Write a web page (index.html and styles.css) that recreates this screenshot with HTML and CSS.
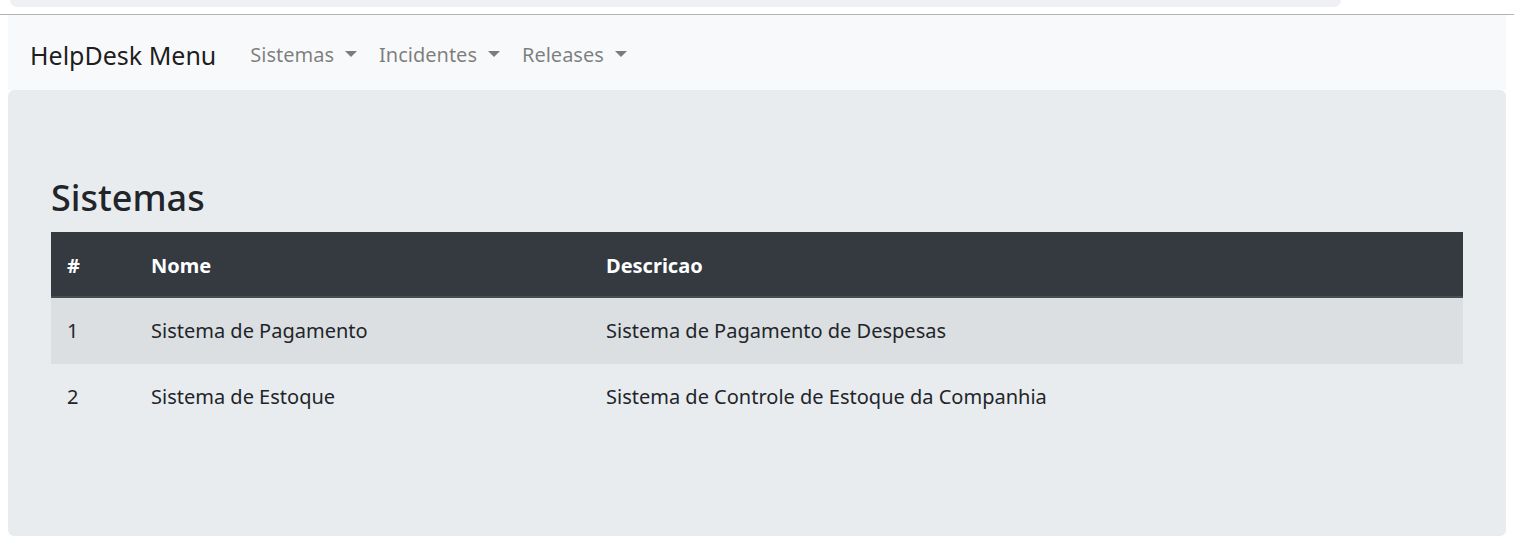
FILE: index.html
```html
<!DOCTYPE html>
<html lang="pt">
<head>
<meta charset="utf-8">
<title>HelpDesk</title>
<link rel="stylesheet" href="styles.css">
</head>
<body>
<div class="topbar"><div class="pill"></div></div>
<div class="page">
  <nav class="navbar">
    <span class="brand">HelpDesk Menu</span>
    <ul class="nav">
      <li class="nav-link">Sistemas<span class="caret"></span></li>
      <li class="nav-link">Incidentes<span class="caret"></span></li>
      <li class="nav-link">Releases<span class="caret"></span></li>
    </ul>
  </nav>
  <main class="jumbotron">
    <h2 class="title">Sistemas</h2>
    <table class="table">
      <thead>
        <tr><th class="c1">#</th><th class="c2">Nome</th><th>Descricao</th></tr>
      </thead>
      <tbody>
        <tr class="odd"><td>1</td><td>Sistema de Pagamento</td><td>Sistema de Pagamento de Despesas</td></tr>
        <tr><td>2</td><td>Sistema de Estoque</td><td>Sistema de Controle de Estoque da Companhia</td></tr>
      </tbody>
    </table>
  </main>
</div>
</body>
</html>
```

FILE: styles.css
```css
* { box-sizing: border-box; }
html, body { margin: 0; padding: 0; background: #fff; }
body {
  font-family: "Noto Sans", "Open Sans", sans-serif;
  color: #212529;
  font-size: 20px;
}
.topbar {
  height: 15px;
  border-bottom: 1px solid #b3b3b3;
  padding-left: 10px;
}
.pill {
  width: 1331px;
  height: 7px;
  background: #eef0f3;
  border-radius: 0 0 8px 8px;
}
.page { padding: 0 8px; }
.navbar {
  display: flex;
  align-items: center;
  height: 75px;
  padding: 4px 22px 0;
  background: #f8f9fa;
}
.brand {
  font-size: 25px;
  color: rgba(0,0,0,.9);
  margin-right: 23px;
  white-space: nowrap;
}
.nav {
  display: flex;
  list-style: none;
  margin: 0;
  padding: 0;
}
.nav-link {
  padding: 0 11px;
  color: rgba(0,0,0,.5);
  font-size: 20px;
  white-space: nowrap;
}
.caret {
  display: inline-block;
  margin-left: 11px;
  vertical-align: 5px;
  border-top: 6px solid;
  border-left: 6px solid transparent;
  border-right: 6px solid transparent;
}
.jumbotron {
  background: #e9ecef;
  border-radius: 6px;
  padding: 86px 43px 106px;
}
.title {
  margin: 0 0 12px;
  font-size: 36px;
  font-weight: 500;
  line-height: 44px;
  color: #212529;
}
.table {
  width: 100%;
  border-collapse: collapse;
}
.table th, .table td {
  text-align: left;
  padding: 18px 16px 18px;
  line-height: 30px;
  vertical-align: top;
}
.table th {
  background: #343a40;
  color: #fff;
  font-weight: 700;
  border-bottom: 2px solid #454d55;
  padding-top: 19px;
  padding-bottom: 15px;
}
.table th.c1 { width: 84px; }
.table th.c2 { width: 455px; }
.table td { color: #212529; }
.table tr.odd td { background: #dcdfe2; }
```
